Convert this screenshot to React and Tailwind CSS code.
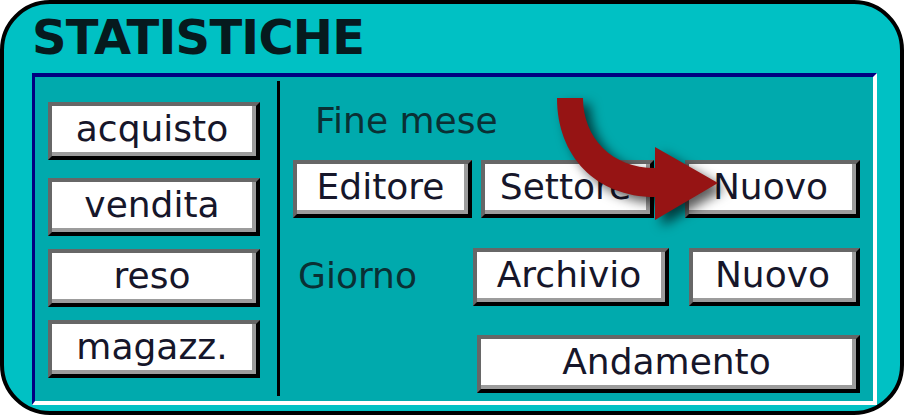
import React from "react";

const font = { fontFamily: '"DejaVu Sans", Verdana, sans-serif' };

function Btn({ label, className = "" }) {
  return (
    <div
      className={`flex h-[58px] border-t-4 border-l-4 border-r-4 border-b-4 border-t-[#676767] border-l-[#676767] border-r-black border-b-black ${className}`}
    >
      <div className="flex flex-1 items-center justify-center border-r-4 border-b-4 border-[#9c9c9c] bg-white">
        <span className="text-[36px] leading-[36px] text-[#16162a] whitespace-nowrap" style={font}>
          {label}
        </span>
      </div>
    </div>
  );
}

export default function App() {
  return (
    <div className="relative h-[417px] w-[904px] bg-white overflow-hidden" style={font}>
      <div className="flex h-[415px] w-[904px] flex-col rounded-[50px] border-4 border-black bg-[#00c1c4]">
        <div
          className="ml-[28px] mt-[9px] h-[48px] text-[48px] font-bold leading-[48px] tracking-[-0.8px] text-[#061a1e]"
          style={font}
        >
          STATISTICHE
        </div>
        <div className="ml-[28px] mt-[12px] flex h-[332px] w-[845px] border-t-4 border-l-[3px] border-r-4 border-b-4 border-t-[#000080] border-l-[#000080] border-r-white border-b-white bg-[#00aaad]">
          {/* left column */}
          <div className="flex w-[242px] flex-col pl-[13px] pt-[25px]">
            <Btn label="acquisto" className="w-[212px] h-[57px]" />
            <Btn label="vendita" className="mt-[18px] w-[212px]" />
            <Btn label="reso" className="mt-[13px] w-[212px]" />
            <Btn label="magazz." className="mt-[13px] w-[212px]" />
          </div>
          {/* divider */}
          <div className="mt-[4px] mb-[5px] w-[3px] bg-black" />
          {/* right column */}
          <div className="flex flex-1 flex-col pt-[26px]">
            <div className="ml-[35px] h-[36px] text-[36px] leading-[36px] text-[#0a3034]">Fine mese</div>
            <div className="mt-[21px] flex">
              <Btn label="Editore" className="ml-[13px] w-[179px]" />
              <Btn label="Settore" className="ml-[9px] w-[173px]" />
              <Btn label="Nuovo" className="ml-[31px] w-[175px]" />
            </div>
            <div className="mt-[30px] flex">
              <div className="ml-[18px] mt-[10px] h-[36px] w-[175px] text-[36px] leading-[36px] text-[#0a3034]">
                Giorno
              </div>
              <Btn label="Archivio" className="w-[196px]" />
              <Btn label="Nuovo" className="ml-[20px] w-[171px]" />
            </div>
            <div className="mt-[29px] flex">
              <Btn label="Andamento" className="ml-[197px] w-[383px]" />
            </div>
          </div>
        </div>
      </div>
      {/* arrow overlay */}
      <svg
        className="pointer-events-none absolute left-0 top-0"
        width="904"
        height="417"
        viewBox="0 0 904 417"
        style={{ filter: "drop-shadow(7px 6px 6px rgba(0,0,0,0.65))" }}
      >
        <path
          d="M557 98 L583 98 C583 138 612 168 655 168 L655 147 L718 183 L655 220 L655 197 C596 197 557 156 557 98 Z"
          fill="#961414"
        />
      </svg>
    </div>
  );
}
